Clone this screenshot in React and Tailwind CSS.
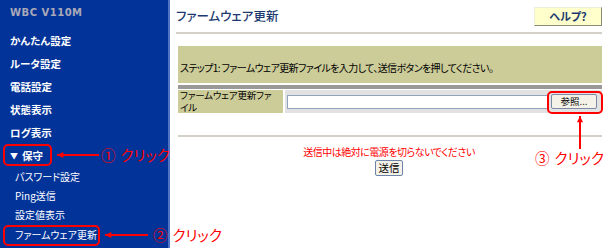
const jp = { fontFamily: '"Noto Sans CJK JP", "Liberation Sans", sans-serif' };

const mainMenu = ['かんたん設定', 'ルータ設定', '電話設定', '状態表示', 'ログ表示'];
const subMenu = ['パスワード設定', 'Ping送信', '設定値表示', 'ファームウェア更新'];

function Arrow({ x1, y1, x2, y2 }) {
  // arrow head sits at x1,y1
  const ang = Math.atan2(y2 - y1, x2 - x1);
  const s = 7;
  const a1 = [x1 + s * Math.cos(ang + 0.45), y1 + s * Math.sin(ang + 0.45)];
  const a2 = [x1 + s * Math.cos(ang - 0.45), y1 + s * Math.sin(ang - 0.45)];
  return (
    <svg className="absolute left-0 top-0 pointer-events-none" width="611" height="248">
      <line x1={x1} y1={y1} x2={x2} y2={y2} stroke="#ff0000" strokeWidth="2" />
      <polygon points={`${x1},${y1} ${a1[0]},${a1[1]} ${a2[0]},${a2[1]}`} fill="#ff0000" />
    </svg>
  );
}

function Note({ n, className }) {
  return (
    <div className={`absolute flex items-center gap-[5px] whitespace-nowrap text-[#ff0000] text-[14.5px] leading-[16px] ${className}`} style={jp}>
      <span>{n}</span>
      <span>クリック</span>
    </div>
  );
}

export default function App() {
  return (
    <div className="relative w-[611px] h-[248px] overflow-hidden bg-white flex [font-feature-settings:'palt']" style={jp}>
      <aside className="w-[170px] shrink-0 bg-[#023399] border-r-2 border-[#4f74c4] flex flex-col pt-[5px]">
        <div className="h-[15px] leading-[15px] pl-[10px] text-[10px] font-bold text-[#a9a9b8] tracking-[0.5px]" style={{ fontFamily: '"DejaVu Sans", sans-serif' }}>
          WBC V110M
        </div>
        <div className="mt-[9px] flex flex-col">
          {mainMenu.map((m) => (
            <div key={m} className="h-[23px] leading-[23px] pl-[10px] text-white text-[10.5px] font-bold">{m}</div>
          ))}
          <div className="h-[23px] leading-[23px] pl-[10px] text-white text-[10.5px] font-bold flex items-center gap-[4px]">
            <span className="text-[8px]">▼</span>
            <span>保守</span>
          </div>
          {subMenu.map((m, i) => (
            <div key={m} className={`${i === 3 ? 'h-[21px] leading-[21px]' : 'h-[19px] leading-[19px]'} pl-[15px] text-white text-[10px]`}>{m}</div>
          ))}
        </div>
      </aside>

      <main className="flex-1 pl-[6px] pr-[9px] flex flex-col">
        <div className="h-[34px] flex items-center justify-between border-b-2 border-[#d4d0c8]">
          <h1 className="text-[12.5px] text-[#1d3a70] font-medium">ファームウェア更新</h1>
          <button className="w-[68px] h-[19px] bg-[#ffffcc] border border-t-[#eeeedd] border-l-[#eeeedd] border-r-[#8a8a7a] border-b-[#8a8a7a] text-[11px] font-bold text-[#1d3a70] leading-none">
            ヘルプ?
          </button>
        </div>

        <div className="ml-[2px] mt-[12px] h-[37px] bg-[#cccc99] flex items-center pt-[5px] pl-[2px] text-[10px] tracking-[-0.6px] text-black">
          ステップ1: ファームウェア更新ファイルを入力して、送信ボタンを押してください。
        </div>
        <div className="ml-[2px] mt-[2px] h-[4px] bg-[#999999]" />
        <div className="ml-[2px] mt-[1px] h-[23px] flex gap-[2px]">
          <div className="w-[105px] bg-[#cccc99] pl-[2px] text-black">
            <p className="w-[94px] text-[9.5px] tracking-[-0.2px] leading-[11.5px] break-all">ファームウェア更新ファイル</p>
          </div>
          <div className="flex-1 bg-[#e2e2e2] flex items-center pl-[2px] pr-[5px] gap-[3px]">
            <div className="w-[261px] h-[14px] bg-white border border-[#8fa3bf]" />
            <button className="w-[46px] h-[15px] bg-[#f4f2e8] border border-[#7b8aa6] rounded-[2px] text-[9.5px] leading-none text-black">
              参照...
            </button>
          </div>
        </div>

        <div className="ml-[2px] mt-[22px] h-[2px] bg-[#d4d0c8]" />
        <div className="mt-[8px] text-center text-[10px] tracking-[-0.5px] leading-[14px] text-[#ff0000]">
          送信中は絶対に電源を切らないでください
        </div>
        <div className="flex justify-center mt-[1px]">
          <button className="w-[28px] h-[16px] bg-[#f4f2e8] border border-[#6d83a8] rounded-[2px] text-[10.5px] leading-none text-black">
            送信
          </button>
        </div>
      </main>

      <div className="absolute left-[3px] top-[144px] w-[49px] h-[22px] border-2 border-[#ff0000] rounded-[5px]" />
      <Arrow x1={57} y1={155} x2={99} y2={155} />
      <Note n="①" className="left-[101px] top-[147px]" />

      <div className="absolute left-[3px] top-[225px] w-[97px] h-[21px] border-2 border-[#ff0000] rounded-[5px]" />
      <Arrow x1={105} y1={235} x2={148} y2={235} />
      <Note n="②" className="left-[153px] top-[227px]" />

      <div className="absolute left-[547px] top-[91px] w-[56px] h-[23px] border-2 border-[#ff0000] rounded-[5px]" />
      <Arrow x1={580} y1={116} x2={580} y2={149} />
      <Note n="③" className="left-[535px] top-[150px]" />
    </div>
  );
}
